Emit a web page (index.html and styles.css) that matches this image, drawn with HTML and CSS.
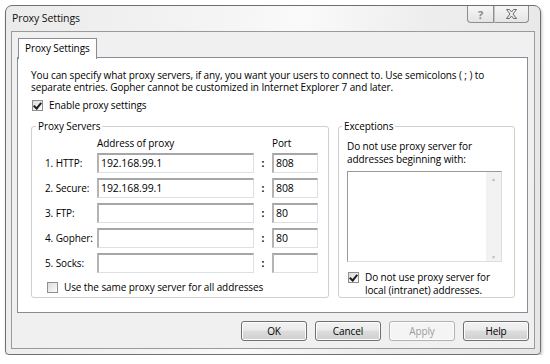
FILE: index.html
```html
<!DOCTYPE html>
<html lang="en">
<head>
    <meta charset="UTF-8">
    <title>Proxy Settings</title>
    <link rel="stylesheet" href="styles.css">
</head>
<body>
    <div class="window">
        <div class="title_bar">
            <span class="title_text">Proxy Settings</span>
            <div class="caption_buttons">
                <div class="cap_btn cap_help">?</div>
                <div class="cap_btn cap_close">
                    <svg width="13" height="10" viewBox="0 0 13 10">
                        <path d="M1.5 0.5 H4.5 L6.5 3 L8.5 0.5 H11.5 L8 5 L11.5 9.5 H8.5 L6.5 7 L4.5 9.5 H1.5 L5 5 Z" fill="none" stroke="#6b6b6b" stroke-width="1"/>
                    </svg>
                </div>
            </div>
        </div>
        <div class="client">
            <div class="tabs">
                <div class="tab">Proxy Settings</div>
            </div>
            <div class="tab_page">
                <p class="intro">You can specify what proxy servers, if any, you want your users to connect to. Use semicolons ( ; ) to separate entries. Gopher cannot be customized in Internet Explorer 7 and later.</p>
                <label class="check_row enable_row">
                    <span class="checkbox checked"></span>
                    Enable proxy settings
                </label>
                <div class="groups">
                    <fieldset class="group servers">
                        <legend>Proxy Servers</legend>
                        <div class="server_grid">
                            <span></span>
                            <span class="col_head">Address of proxy</span>
                            <span></span>
                            <span class="col_head">Port</span>

                            <span class="row_label">1. HTTP:</span>
                            <div class="textbox">192.168.99.1</div>
                            <span class="colon">:</span>
                            <div class="textbox">808</div>

                            <span class="row_label">2. Secure:</span>
                            <div class="textbox">192.168.99.1</div>
                            <span class="colon">:</span>
                            <div class="textbox">808</div>

                            <span class="row_label">3. FTP:</span>
                            <div class="textbox"></div>
                            <span class="colon">:</span>
                            <div class="textbox">80</div>

                            <span class="row_label">4. Gopher:</span>
                            <div class="textbox"></div>
                            <span class="colon">:</span>
                            <div class="textbox">80</div>

                            <span class="row_label">5. Socks:</span>
                            <div class="textbox"></div>
                            <span class="colon">:</span>
                            <div class="textbox"></div>
                        </div>
                        <label class="check_row same_row">
                            <span class="checkbox"></span>
                            Use the same proxy server for all addresses
                        </label>
                    </fieldset>
                    <fieldset class="group exceptions">
                        <legend>Exceptions</legend>
                        <p class="exc_text">Do not use proxy server for addresses beginning with:</p>
                        <div class="exc_box">
                            <div class="scrollbar">
                                <span class="arrow">&#9650;</span>
                                <span class="arrow">&#9660;</span>
                            </div>
                        </div>
                        <label class="check_row local_row">
                            <span class="checkbox checked"></span>
                            <span class="local_text">Do not use proxy server for local (intranet) addresses.</span>
                        </label>
                    </fieldset>
                </div>
            </div>
            <div class="buttons">
                <div class="btn">OK</div>
                <div class="btn">Cancel</div>
                <div class="btn disabled">Apply</div>
                <div class="btn">Help</div>
            </div>
        </div>
    </div>
</body>
</html>
```

FILE: styles.css
```css
body{
    margin:0;
    background:#fff;
    font-family:"Open Sans","Noto Sans",sans-serif;
    font-size:10px;
    letter-spacing:-0.1px;
    color:#000;
}
.window{
    margin:5px 0 0 5px;
    width:534px;
    height:348px;
    border:1px solid #707070;
    border-radius:7px 7px 4px 4px;
    background:linear-gradient(100deg,#ebebeb 0%,#f4f4f4 35%,#fafafa 50%,#eeeeee 70%,#e6e6e6 100%);
    box-shadow:1px 2px 3px rgba(0,0,0,0.25);
    display:flex;
    flex-direction:column;
}
.title_bar{
    height:25px;
    display:flex;
    justify-content:space-between;
    align-items:flex-start;
}
.title_text{
    margin:5px 0 0 6px;
    font-size:10.5px;
    color:#111;
}
.caption_buttons{
    display:flex;
    margin-right:11px;
}
.cap_btn{
    height:16px;
    border:1px solid #8e8e8e;
    border-top:none;
    background:linear-gradient(#f6f6f6,#e4e4e4);
    display:flex;
    align-items:center;
    justify-content:center;
    color:#888;
}
.cap_help{
    width:25px;
    border-radius:0 0 0 4px;
    font-size:11px;
    font-weight:bold;
}
.cap_close{
    width:33px;
    border-left:1px solid #c4c4c4;
    border-radius:0 0 4px 0;
}
.client{
    flex:1;
    margin:0 5px 5px 5px;
    border:1px solid #9a9a9a;
    background:#f0f0f0;
    padding:6px 6px 0 5px;
    display:flex;
    flex-direction:column;
}
.tabs{
    display:flex;
    height:19px;
}
.tab{
    padding:0 6px;
    margin-left:1px;
    height:20px;
    line-height:19px;
    background:#fff;
    border:1px solid #898c95;
    border-bottom:none;
    position:relative;
    z-index:1;
}
.tab_page{
    height:256px;
    box-sizing:border-box;
    background:#fff;
    border:1px solid #898c95;
    padding:11px 11px 0 13px;
    display:flex;
    flex-direction:column;
}
.intro{
    margin:0;
    line-height:12px;
    padding-right:20px;
}
.check_row{
    display:flex;
    align-items:center;
    gap:6px;
}
.enable_row{
    margin:5px 0 0 1px;
}
.checkbox{
    width:11px;
    height:11px;
    box-sizing:border-box;
    border:1px solid #8f8f8f;
    background:linear-gradient(135deg,#dcdcdc,#fcfcfc);
    flex:none;
    position:relative;
}
.checkbox.checked::after{
    content:"";
    position:absolute;
    left:2px;
    top:0px;
    width:3px;
    height:6px;
    border:solid #1e1e1e;
    border-width:0 2px 2px 0;
    transform:rotate(40deg);
}
.groups{
    display:flex;
    gap:9px;
    margin-top:8px;
}
.group{
    margin:0;
    border:1px solid #cfcfcf;
    border-radius:3px;
    height:178px;
    box-sizing:border-box;
}
.group legend{
    padding:0 2px;
    line-height:13px;
}
.servers{
    width:298px;
    padding:2px 0 0 13px;
}
.servers legend{
    margin-left:-9px;
}
.exceptions{
    width:177px;
    padding:3px 0 0 8px;
}
.exceptions legend{
    margin-left:-5px;
}
.server_grid{
    display:grid;
    grid-template-columns:52px 157px 18px 46px;
    grid-template-rows:13px repeat(5,20px);
    row-gap:5px;
    align-items:center;
}
.server_grid .col_head{
    align-self:end;
}
.col_head{
    margin-bottom:-2px;
}
.colon{
    text-align:center;
    font-weight:bold;
}
.textbox{
    height:20px;
    box-sizing:border-box;
    border:1px solid #dbdfe6;
    border-top:2px solid #a6a6a6;
    border-left:2px solid #b4b4b4;
    background:#fff;
    padding:1px 2px 0 2px;
    line-height:15px;
    font-size:10.5px;
}
.same_row{
    margin:7px 0 0 2px;
}
.exc_text{
    margin:4px 0 0 0;
    line-height:13px;
    width:160px;
}
.exc_box{
    margin-top:5px;
    width:155px;
    height:91px;
    box-sizing:border-box;
    border:1px solid #9a9a9a;
    border-right-color:#dedede;
    border-bottom-color:#dedede;
    background:#fff;
    display:flex;
    justify-content:flex-end;
}
.scrollbar{
    width:15px;
    background:#f2f2f2;
    display:flex;
    flex-direction:column;
    justify-content:space-between;
    align-items:center;
    padding:4px 0 1px;
}
.arrow{
    font-size:5px;
    color:#b9b9b9;
}
.local_row{
    margin:9px 0 0 1px;
    align-items:flex-start;
    line-height:13px;
}
.local_row .checkbox{
    margin-top:1px;
}
.local_text{
    width:135px;
}
.buttons{
    display:flex;
    justify-content:flex-end;
    gap:8px;
    margin-top:8px;
    margin-right:-1px;
}
.btn{
    width:64px;
    height:18px;
    border:1px solid #707070;
    border-radius:3px;
    background:linear-gradient(#f2f2f2 0%,#ebebeb 45%,#dddddd 50%,#cfcfcf 100%);
    display:flex;
    align-items:center;
    justify-content:center;
    box-shadow:inset 0 0 0 1px #fcfcfc;
}
.btn.disabled{
    border-color:#adb2b5;
    background:#f4f4f4;
    color:#9c9c9c;
}
```
